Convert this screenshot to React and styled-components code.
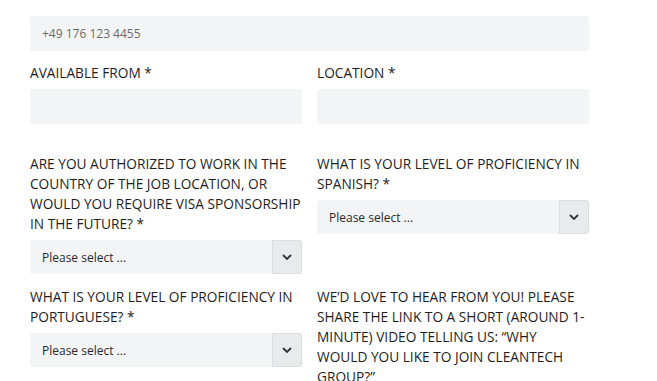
import React from 'react';
import styled, { createGlobalStyle } from 'styled-components';

const GlobalStyle = createGlobalStyle`
  body {
    margin: 0;
    background: #fff;
    font-family: "Open Sans", "Liberation Sans", sans-serif;
  }
`;

const fields = [
  [
    { label: 'Available from *', type: 'input' },
    { label: 'Location *', type: 'input' },
  ],
  [
    {
      label: 'Are you authorized to work in the country of the job location, or would you require visa sponsorship in the future? *',
      type: 'select',
    },
    { label: 'What is your level of proficiency in Spanish? *', type: 'select' },
  ],
  [
    { label: 'What is your level of proficiency in Portuguese? *', type: 'select' },
    {
      label: 'We\u2019d love to hear from you! Please share the link to a short (around 1-minute) video telling us: \u201CWhy would you like to join Cleantech Group?\u201D',
      type: 'none',
    },
  ],
];

function Chevron() {
  return (
    <svg width="10" height="6" viewBox="0 0 10 6">
      <path d="M1 1l4 4 4-4" fill="none" stroke="#333" strokeWidth="1.8" />
    </svg>
  );
}

function Select() {
  return (
    <SelectBox>
      <SelectText>Please select ...</SelectText>
      <Arrow>
        <Chevron />
      </Arrow>
    </SelectBox>
  );
}

export default function App() {
  return (
    <Page>
      <GlobalStyle />
      <Phone>+49 176 123 4455</Phone>
      {fields.map((row, i) => (
        <Row key={i} gap={i === 0 ? 12 : i === 1 ? 30 : 13}>
          {row.map((f, j) => (
            <Field key={j}>
              <Label>{f.label}</Label>
              {f.type === 'input' && <Input />}
              {f.type === 'select' && <Select />}
            </Field>
          ))}
        </Row>
      ))}
    </Page>
  );
}

const Page = styled.div`
  width: 559px;
  padding: 16px 0 0 30px;
`;

const Phone = styled.div`
  height: 35px;
  background: #f3f4f6;
  border-radius: 2px;
  padding-left: 12px;
  display: flex;
  align-items: center;
  font-size: 12px;
  color: #6b6b6b;
`;

const Row = styled.div`
  display: grid;
  grid-template-columns: 272px 272px;
  column-gap: 15px;
  margin-top: ${(p) => p.gap}px;
  align-items: start;
`;

const Field = styled.div`
  display: flex;
  flex-direction: column;
`;

const Label = styled.div`
  font-size: 13.7px;
  line-height: 20px;
  text-transform: uppercase;
  color: #1e1e1e;
  margin-bottom: 6px;
`;

const Input = styled.div`
  height: 35px;
  background: #f3f4f6;
  border-radius: 2px;
`;

const SelectBox = styled.div`
  height: 34px;
  display: flex;
  background: #f3f4f6;
  border-radius: 3px;
`;

const SelectText = styled.div`
  flex: 1;
  display: flex;
  align-items: center;
  padding-left: 12px;
  font-size: 12px;
  color: #2a2a2a;
`;

const Arrow = styled.div`
  width: 28px;
  display: flex;
  align-items: center;
  justify-content: center;
  background: #e9eaec;
  border: 1px solid #dcdde0;
  border-radius: 0 3px 3px 0;
`;
